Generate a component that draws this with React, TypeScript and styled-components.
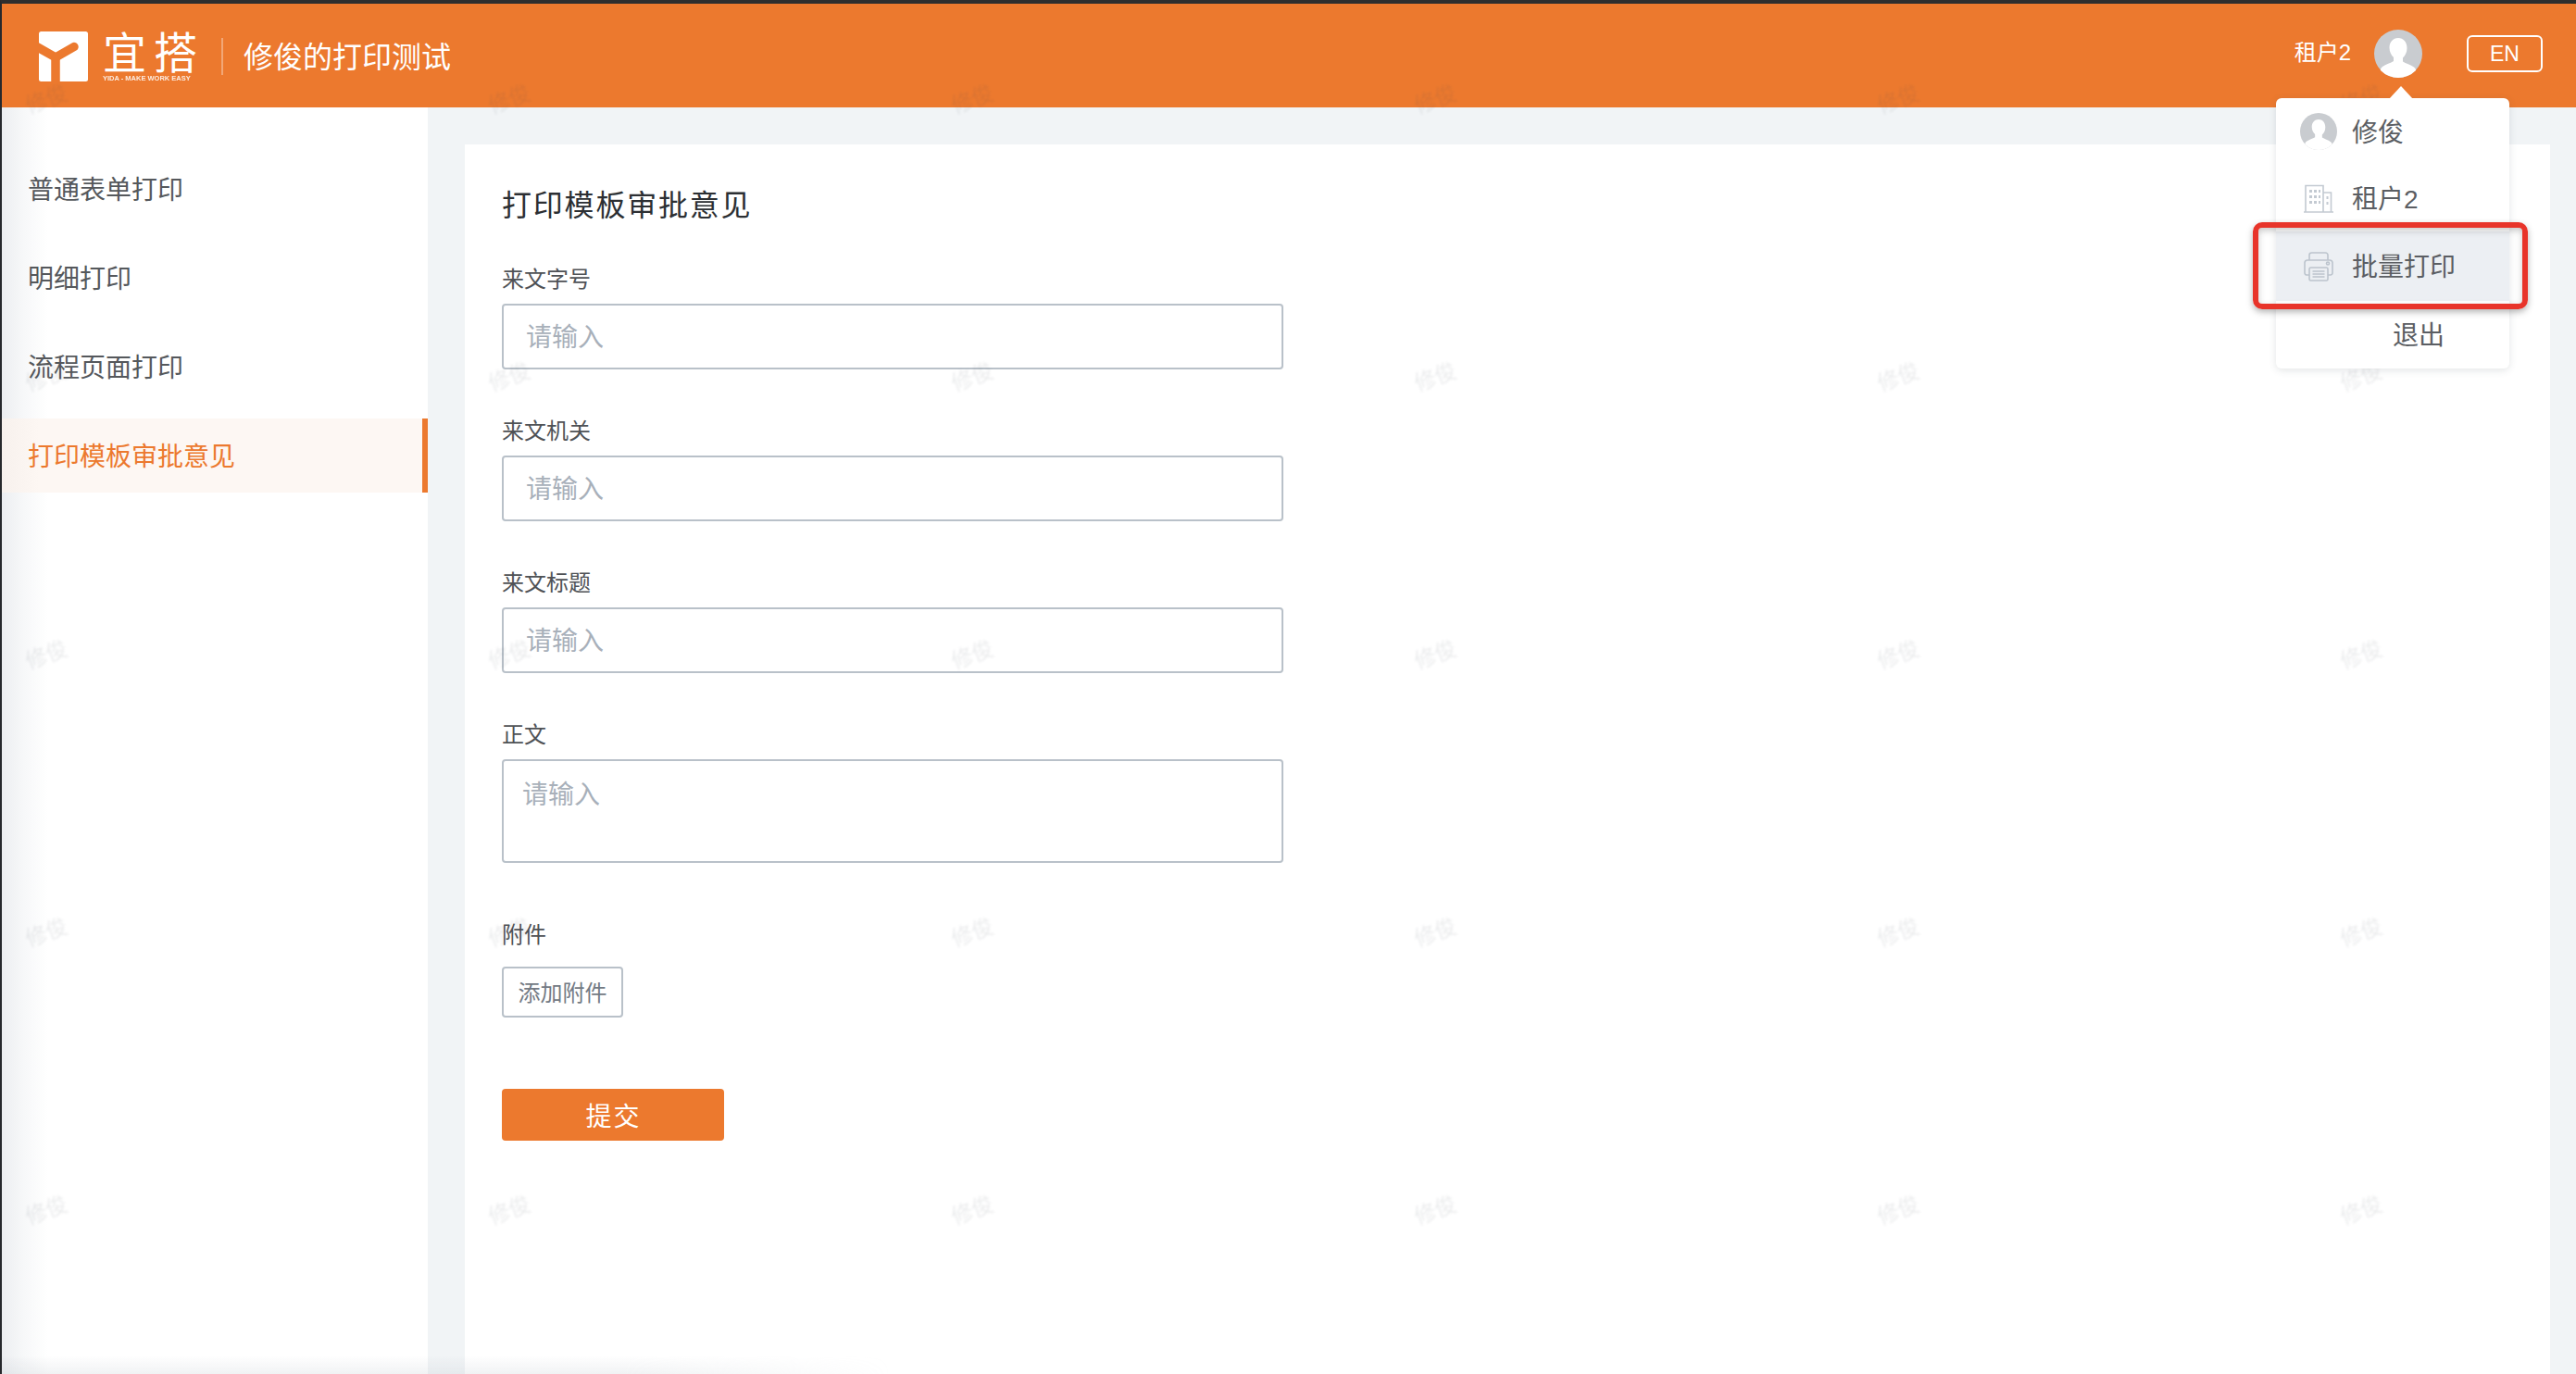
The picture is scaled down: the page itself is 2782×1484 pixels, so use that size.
import React from "react";
import styled, { createGlobalStyle } from "styled-components";

const ORANGE = "#ec792e";
const FONT = '"Liberation Sans", "Noto Sans CJK SC", sans-serif';

const Global = createGlobalStyle`
  html, body { margin: 0; padding: 0; background: #f1f4f6; }
  * { box-sizing: border-box; }
  body { font-family: ${FONT}; overflow: hidden; }
`;

const Page = styled.div`
  position: relative;
  width: 2782px;
  height: 1484px;
  overflow: hidden;
  display: flex;
  flex-direction: column;
  background: #f1f4f6;
  border-top: 4px solid #2e2e2e;
  border-left: 2px solid #26282c;
`;

const Header = styled.header`
  position: relative;
  height: 112px;
  flex: none;
  display: flex;
  align-items: center;
  background: ${ORANGE};
  color: #fff;
  padding-left: 40px;
  padding-right: 36px;
`;

const Logo = styled.svg`
  width: 53px;
  height: 54px;
  flex: none;
  margin-top: 2px;
`;

const Brand = styled.div`
  margin-left: 16px;
  width: 106px;
  display: flex;
  flex-direction: column;
  margin-top: 4px;
`;

const BrandName = styled.div`
  font-size: 47px;
  line-height: 48px;
  height: 46px;
  letter-spacing: 8px;
  white-space: nowrap;
`;

const BrandTag = styled.div`
  font-size: 7.5px;
  font-weight: 700;
  line-height: 10px;
  white-space: nowrap;
  opacity: 0.85;
`;

const Divider = styled.div`
  width: 2px;
  height: 40px;
  margin-left: 22px;
  margin-top: 2px;
  background: rgba(255, 255, 255, 0.35);
`;

const AppTitle = styled.div`
  margin-left: 22px;
  font-size: 32px;
  line-height: 44px;
  margin-top: 4px;
  white-space: nowrap;
`;

const HeaderRight = styled.div`
  margin-left: auto;
  display: flex;
  align-items: center;
`;

const Tenant = styled.div`
  font-size: 24px;
  line-height: 32px;
  margin-right: 25px;
  margin-top: -6px;
  white-space: nowrap;
`;

const AvatarWrap = styled.div`
  width: 52px;
  height: 52px;
  margin-right: 48px;
  margin-top: -4px;
`;

const LangButton = styled.div`
  width: 82px;
  height: 40px;
  border: 2px solid #fff;
  border-radius: 6px;
  display: flex;
  align-items: center;
  justify-content: center;
  font-size: 23px;
  margin-top: -4px;
`;

const Body = styled.div`
  flex: 1;
  display: flex;
  min-height: 0;
`;

const Sidebar = styled.nav`
  width: 460px;
  flex: none;
  padding-top: 48px;
  display: flex;
  flex-direction: column;
  gap: 16px;
  background: linear-gradient(to right, #eceef1 0, #f7f8f9 24px, #ffffff 50px);
`;

const NavItem = styled.div<{ $active?: boolean }>`
  height: 80px;
  display: flex;
  align-items: center;
  padding-left: 28px;
  padding-bottom: 3px;
  font-size: 28px;
  color: ${(p) => (p.$active ? ORANGE : "#55585c")};
  background: ${(p) => (p.$active ? "linear-gradient(to right, #f7f1ed 0, #fdf7f3 40px)" : "transparent")};
  border-right: ${(p) => (p.$active ? `6px solid ${ORANGE}` : "none")};
`;

const Main = styled.main`
  flex: 1;
  padding: 40px 28px 0 40px;
  display: flex;
  min-width: 0;
`;

const Card = styled.section`
  flex: 1;
  background: #fff;
  padding: 40px 40px 0;
`;

const CardTitle = styled.h1`
  margin: 0 0 38px;
  padding-top: 2px;
  font-size: 32px;
  font-weight: 400;
  line-height: 48px;
  letter-spacing: 1.8px;
  color: #2c2f33;
`;

const Field = styled.div<{ $gap: number }>`
  display: flex;
  flex-direction: column;
  align-items: flex-start;
  margin-bottom: ${(p) => p.$gap}px;
`;

const Label = styled.label<{ $gap?: number }>`
  font-size: 24px;
  line-height: 36px;
  color: #4f5256;
  margin-bottom: ${(p) => p.$gap ?? 8}px;
`;

const TextInput = styled.input`
  width: 844px;
  height: 71px;
  border: 2px solid #b9c1c9;
  border-radius: 4px;
  padding: 3px 25px 0 24px;
  font-family: ${FONT};
  font-size: 28px;
  background: transparent;
  outline: none;
  &::placeholder { color: #a8b0ba; opacity: 1; }
`;

const TextArea = styled.textarea`
  display: block;
  width: 844px;
  height: 112px;
  border: 2px solid #b9c1c9;
  border-radius: 4px;
  padding: 19px 21px 0 20px;
  line-height: 36px;
  font-family: ${FONT};
  font-size: 28px;
  background: transparent;
  outline: none;
  resize: none;
  &::placeholder { color: #a8b0ba; opacity: 1; }
`;

const AddButton = styled.button`
  width: 131px;
  height: 55px;
  padding: 0 0 3px;
  border: 2px solid #b9c1c9;
  border-radius: 4px;
  background: #fff;
  font-family: ${FONT};
  font-size: 24px;
  color: #737a84;
`;

const SubmitButton = styled.button`
  display: block;
  width: 240px;
  height: 56px;
  padding: 0 0 1px 1px;
  border: none;
  border-radius: 4px;
  background: ${ORANGE};
  color: #fff;
  font-family: ${FONT};
  font-size: 28px;
  letter-spacing: 2px;
`;

const Watermarks = styled.div`
  position: absolute;
  left: 0;
  top: 0;
  width: 100%;
  pointer-events: none;
  display: grid;
  grid-template-columns: repeat(6, 500px);
  grid-auto-rows: 300px;
  padding-left: 21px;
  padding-top: 88px;
`;

const Mark = styled.span`
  width: 54px;
  height: 30px;
  line-height: 30px;
  font-size: 23px;
  text-align: center;
  color: rgba(60, 70, 80, 0.1);
  transform: rotate(-20deg);
  filter: blur(0.9px);
`;

const BottomShade = styled.div`
  position: absolute;
  left: 0;
  bottom: 0;
  width: 960px;
  height: 20px;
  pointer-events: none;
  background: linear-gradient(to top, rgba(190, 198, 205, 0.22), rgba(190, 198, 205, 0));
  mask-image: linear-gradient(to right, #000 70%, transparent);
`;

const Menu = styled.div`
  position: absolute;
  left: 2456px;
  top: 102px;
  width: 252px;
  height: 292px;
  background: #fff;
  border-radius: 6px;
  box-shadow: 0 2px 8px rgba(60, 70, 80, 0.14);
  display: flex;
  flex-direction: column;
  &::before {
    content: "";
    position: absolute;
    left: 122px;
    top: -13px;
    width: 0;
    height: 0;
    border-left: 13px solid transparent;
    border-right: 13px solid transparent;
    border-bottom: 14px solid #fff;
  }
`;

const MenuItem = styled.div<{ $h: number; $hi?: boolean; $indent?: number }>`
  position: relative;
  height: ${(p) => p.$h}px;
  flex: none;
  display: flex;
  align-items: center;
  padding-left: ${(p) => p.$indent ?? 26}px;
  font-size: 28px;
  color: #5b5e63;
  background: ${(p) => (p.$hi ? "#eceff3" : "transparent")};
`;

const MenuText = styled.span`
  display: block;
  margin-left: -1px;
  padding-bottom: 3px;
`;

const MenuIcon = styled.span`
  width: 40px;
  height: 40px;
  margin-right: 17px;
  display: flex;
  align-items: center;
  justify-content: center;
  flex: none;
`;

const RedFrame = styled.div`
  position: absolute;
  left: -25px;
  right: -20px;
  top: -10px;
  bottom: -9px;
  border: 6px solid #e8342a;
  border-radius: 10px;
  box-shadow: 0 3px 7px rgba(40, 40, 40, 0.35), inset 0 3px 7px rgba(40, 40, 40, 0.25);
  pointer-events: none;
`;

const AvatarIcon = ({ size }: { size: number }) => (
  <svg width={size} height={size} viewBox="0 0 52 52">
    <defs>
      <clipPath id={`av${size}`}>
        <circle cx="26" cy="26" r="26" />
      </clipPath>
    </defs>
    <circle cx="26" cy="26" r="26" fill="#c9ccd0" />
    <g clipPath={`url(#av${size})`}>
      <path
        fill="#fff"
        d="M26 9c-5.500 0-9.500 4.300-9.500 10.500 0 4.500 2 8.200 4.500 10.400v4.200c-3 2-8.500 3.400-12 5.900-1.500 1.100-2.500 3-2.500 5C11 50 18 54 26 54s15-4 19.500-8.500c0-2-1-3.900-2.500-5-3.500-2.500-9-3.900-12-5.900v-4.200c2.500-2.200 4.500-5.900 4.500-10.400C35.500 13.300 31.500 9 26 9z"
      />
    </g>
  </svg>
);

const BuildingIcon = () => (
  <svg width="32" height="31" viewBox="0 0 32 31" fill="none" stroke="#c3cad2" strokeWidth="1.6">
    <path d="M2 29.500V1.500h19v28M21 9h8.500v20.500M0 30h32" />
    <g fill="#c3cad2" stroke="none">
      <rect x="6" y="6" width="3" height="3" />
      <rect x="11" y="6" width="3" height="3" />
      <rect x="16" y="6" width="2" height="3" />
      <rect x="6" y="12" width="3" height="3" />
      <rect x="11" y="12" width="3" height="3" />
      <rect x="16" y="12" width="2" height="3" />
      <rect x="6" y="18" width="3" height="3" />
      <rect x="11" y="18" width="3" height="3" />
      <rect x="16" y="18" width="2" height="3" />
      <rect x="24.500" y="13" width="2" height="3" />
      <rect x="24.500" y="19" width="2" height="3" />
    </g>
  </svg>
);

const PrinterIcon = () => (
  <svg width="32" height="32" viewBox="0 0 32 32" fill="none" stroke="#bcc4cd" strokeWidth="1.6">
    <path d="M6 9V3.500A2.500 2.500 0 0 1 8.500 1h15A2.500 2.500 0 0 1 26 3.500V9" />
    <path d="M6 25H3a2.500 2.500 0 0 1-2-2.500v-11A3 3 0 0 1 4 9h24a3 3 0 0 1 3 2.500v11a2.500 2.500 0 0 1-2 2.500h-3" />
    <rect x="6" y="17" width="20" height="14" rx="1.500" />
    <path d="M9.500 21h13M9.500 24h13M9.500 27h13" />
    <circle cx="26" cy="12.500" r="1.500" />
  </svg>
);

const nav = ["普通表单打印", "明细打印", "流程页面打印"];

const fields = ["来文字号", "来文机关", "来文标题"];

export default function App() {
  return (
    <Page>
      <Global />
      <Header>
        <Logo viewBox="0 0 53 54">
          <rect width="53" height="54" rx="2.500" fill="#fff" />
          <g fill="none" stroke={ORANGE} strokeWidth="9.500">
            <path d="M-3 16 L18 28 V56" />
            <path d="M18 28 L38 16.500" strokeLinecap="round" />
          </g>
        </Logo>
        <Brand>
          <BrandName>宜搭</BrandName>
          <BrandTag>YIDA - MAKE WORK EASY</BrandTag>
        </Brand>
        <Divider />
        <AppTitle>修俊的打印测试</AppTitle>
        <HeaderRight>
          <Tenant>租户2</Tenant>
          <AvatarWrap>
            <AvatarIcon size={52} />
          </AvatarWrap>
          <LangButton>EN</LangButton>
        </HeaderRight>
      </Header>
      <Body>
        <Sidebar>
          {nav.map((n) => (
            <NavItem key={n}>{n}</NavItem>
          ))}
          <NavItem $active>打印模板审批意见</NavItem>
        </Sidebar>
        <Main>
          <Card>
            <CardTitle>打印模板审批意见</CardTitle>
            {fields.map((f) => (
              <Field key={f} $gap={49}>
                <Label>{f}</Label>
                <TextInput placeholder="请输入" readOnly />
              </Field>
            ))}
            <Field $gap={60}>
              <Label>正文</Label>
              <TextArea placeholder="请输入" readOnly />
            </Field>
            <Field $gap={77}>
              <Label $gap={16}>附件</Label>
              <AddButton>添加附件</AddButton>
            </Field>
            <SubmitButton>提交</SubmitButton>
          </Card>
        </Main>
      </Body>
      <Watermarks>
        {Array.from({ length: 30 }).map((_, i) => (
          <Mark key={i}>修俊</Mark>
        ))}
      </Watermarks>
      <BottomShade />
      <Menu>
        <MenuItem $h={72}>
          <MenuIcon>
            <AvatarIcon size={40} />
          </MenuIcon>
          <MenuText>修俊</MenuText>
        </MenuItem>
        <MenuItem $h={72}>
          <MenuIcon>
            <BuildingIcon />
          </MenuIcon>
          <MenuText>租户2</MenuText>
        </MenuItem>
        <MenuItem $h={75} $hi>
          <MenuIcon>
            <PrinterIcon />
          </MenuIcon>
          <MenuText>批量打印</MenuText>
          <RedFrame />
        </MenuItem>
        <MenuItem $h={73} $indent={127}>
          <MenuText>退出</MenuText>
        </MenuItem>
      </Menu>
    </Page>
  );
}
